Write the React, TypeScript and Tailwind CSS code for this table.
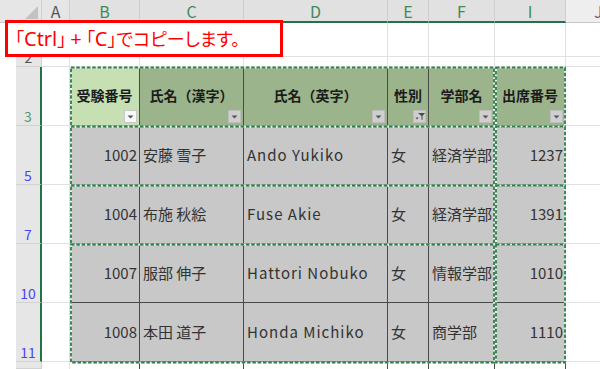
import React from 'react';

type Col = { key: string; w: string; align: 'left' | 'right'; extra?: string };

// visible sheet columns after the row header (G and H are hidden)
const cols: Col[] = [
  { key: 'B', w: 'w-[70px]', align: 'right' },
  { key: 'C', w: 'w-[104px]', align: 'left' },
  { key: 'D', w: 'w-[144px]', align: 'left', extra: 'tracking-[1px]' },
  { key: 'E', w: 'w-[41px]', align: 'left' },
  { key: 'F', w: 'w-[66px]', align: 'left' },
  { key: 'I', w: 'w-[71px]', align: 'right' },
];

const headers = ['受験番号', '氏名（漢字）', '氏名（英字）', '性別', '学部名', '出席番号'];

const rows = [
  { n: '5', cells: ['1002', '安藤 雪子', 'Ando Yukiko', '女', '経済学部', '1237'] },
  { n: '7', cells: ['1004', '布施 秋絵', 'Fuse Akie', '女', '経済学部', '1391'] },
  { n: '10', cells: ['1007', '服部 伸子', 'Hattori Nobuko', '女', '情報学部', '1010'] },
  { n: '11', cells: ['1008', '本田 道子', 'Honda Michiko', '女', '商学部', '1110'] },
];

const font = "font-['Noto_Sans_CJK_JP','Noto_Sans',sans-serif]";

function FilterButton({ active, filtered }: { active?: boolean; filtered?: boolean }) {
  return (
    <div
      className={`absolute right-[2px] bottom-[2px] w-[13px] h-[13px] flex items-center justify-center border ${
        active ? 'bg-[#f7f8f8] border-[#c8c8c8]' : 'bg-[#cfcfcf] border-[#bdbdbd]'
      }`}
    >
      {filtered ? (
        <svg width="10" height="9" viewBox="0 0 10 9">
          <path d="M3 1h7L7.5 4v4l-1-0.6V4z" fill="#4a4a4a" />
          <path d="M0.5 5.5h3L2 7.5z" fill="#4a4a4a" />
        </svg>
      ) : (
        <svg width="7" height="4" viewBox="0 0 7 4">
          <path d="M0.5 0.5h6L3.5 3.5z" fill="#555" />
        </svg>
      )}
    </div>
  );
}

function RowHeader({ label, h, tone, selected }: { label: string; h: string; tone: string; selected?: boolean }) {
  return (
    <div className={`flex ${h}`}>
      <div className="w-[16px] bg-white" />
      <div
        className={`w-[26px] bg-[#e6e6e6] border-b border-[#d2d2d2] flex items-end justify-center pb-[2px] text-[14px] leading-none ${tone} ${
          selected ? 'border-r-2 border-r-[#217346]' : 'border-r border-r-[#cfcfcf]'
        }`}
      >
        {label}
      </div>
    </div>
  );
}

export default function App() {
  return (
    <div className={`relative w-[600px] h-[369px] overflow-hidden bg-white ${font}`}>
      {/* column letters */}
      <div className="flex h-[23px] bg-[#e6e6e6] text-[16px] leading-none">
        <div className="w-[42px] relative border-r border-[#d0d0d0] border-b border-b-[#c8c8c8]">
          <svg className="absolute right-[3px] bottom-[3px]" width="13" height="13" viewBox="0 0 13 13">
            <path d="M13 0v13H0z" fill="#c2c2c2" />
          </svg>
        </div>
        <div className="w-[28px] flex items-center justify-center text-[#555] border-r border-[#d0d0d0] border-b border-b-[#c8c8c8]">
          A
        </div>
        {cols.map((c) => (
          <div
            key={c.key}
            className={`${c.w} flex items-center justify-center text-[#3f8a57] bg-[#e1e1e1] border-r border-[#cfcfcf] border-b-2 border-b-[#217346]`}
          >
            {c.key}
          </div>
        ))}
        <div className="w-[34px] flex items-center pl-[28px] text-[#666] bg-[#eeeeee] border-b border-b-[#c8c8c8]">J</div>
      </div>

      {/* rows 1 and 2: empty (row 1's number sits under the callout) */}
      {[{ n: '', h: 'h-[34px]' }, { n: '2', h: 'h-[10px]' }].map((r) => (
        <div key={r.h} className={`flex ${r.h}`}>
          <RowHeader label={r.n} h={r.h} tone="text-[#555]" />
          <div className="w-[28px] border-r border-b border-[#e1e1e1]" />
          {cols.map((c) => (
            <div key={c.key} className={`${c.w} border-r border-b border-[#e1e1e1]`} />
          ))}
          <div className="w-[34px] border-b border-[#e1e1e1]" />
        </div>
      ))}

      {/* row 3: table headings */}
      <div className="flex h-[59px]">
        <RowHeader label="3" h="h-[59px]" tone="text-[#4f9a70]" selected />
        <div className="w-[28px] border-r border-b border-[#e1e1e1]" />
        {cols.map((c, i) => (
          <div
            key={c.key}
            className={`${c.w} relative flex items-center justify-center text-[14px] font-bold text-[#1b1b1b] border-r border-b border-[#4a4a4a] ${
              i === 0 ? 'bg-[#c6e0b4]' : 'bg-[#9cb48b]'
            }`}
          >
            <span className="pb-[1px]">{headers[i]}</span>
            <FilterButton active={i === 0} filtered={c.key === 'E'} />
          </div>
        ))}
        <div className="w-[34px] border-b border-[#e1e1e1]" />
      </div>

      {/* filtered records */}
      {rows.map((r) => (
        <div key={r.n} className="flex h-[59px]">
          <RowHeader label={r.n} h="h-[59px]" tone="text-[#4646f0]" selected />
          <div className="w-[28px] border-r border-b border-[#e1e1e1]" />
          {cols.map((c, i) => (
            <div
              key={c.key}
              className={`${c.w} flex items-center bg-[#c8c8c8] text-[15px] text-[#333] border-r border-b border-[#4a4a4a] ${
                c.extra ?? ''
              } ${c.align === 'right' ? 'justify-end pr-[2px]' : 'justify-start pl-[3px]'}`}
            >
              {r.cells[i]}
            </div>
          ))}
          <div className="w-[34px] border-b border-[#e1e1e1]" />
        </div>
      ))}

      {/* row 12, cut off */}
      <div className="flex h-[7px]">
        <RowHeader label="" h="h-[7px]" tone="" />
        <div className="w-[28px] border-r border-[#e1e1e1]" />
        {cols.map((c) => (
          <div key={c.key} className={`${c.w} border-r border-[#4a4a4a]`} />
        ))}
      </div>

      {/* copy marquee */}
      <svg className="absolute inset-0 pointer-events-none" width="600" height="369">
        {[
          [67, 126],
          [126, 185],
          [185, 244],
          [244, 362],
        ].flatMap(([t, b]) =>
          [
            [70, 495],
            [495, 566],
          ].map(([l, r]) => (
            <g key={`${t}-${l}`}>
              <rect x={l + 1} y={t + 0.5} width={r - l - 2} height={b - t} fill="none" stroke="#f2f7f2" strokeWidth="1.8" />
              <rect
                x={l + 1}
                y={t + 0.5}
                width={r - l - 2}
                height={b - t}
                fill="none"
                stroke="#2f7d4c"
                strokeWidth="1.8"
                strokeDasharray="3.5 1.8"
              />
            </g>
          ))
        )}
      </svg>

      {/* callout */}
      <div className="absolute left-[5px] top-[20px] w-[278px] h-[37px] bg-white border-[3px] border-[#ff0000] flex items-center pl-[7px]">
        <span className="text-[18px] leading-none text-[#ff0000] whitespace-pre [font-feature-settings:'palt']">
          「<span className="font-['Noto_Sans',sans-serif] text-[20px]">Ctrl</span>」{' '}
          <span className="font-['Noto_Sans',sans-serif] text-[20px]">+</span> 「
          <span className="font-['Noto_Sans',sans-serif] text-[20px]">C</span>」でコピーします。
        </span>
      </div>
    </div>
  );
}
